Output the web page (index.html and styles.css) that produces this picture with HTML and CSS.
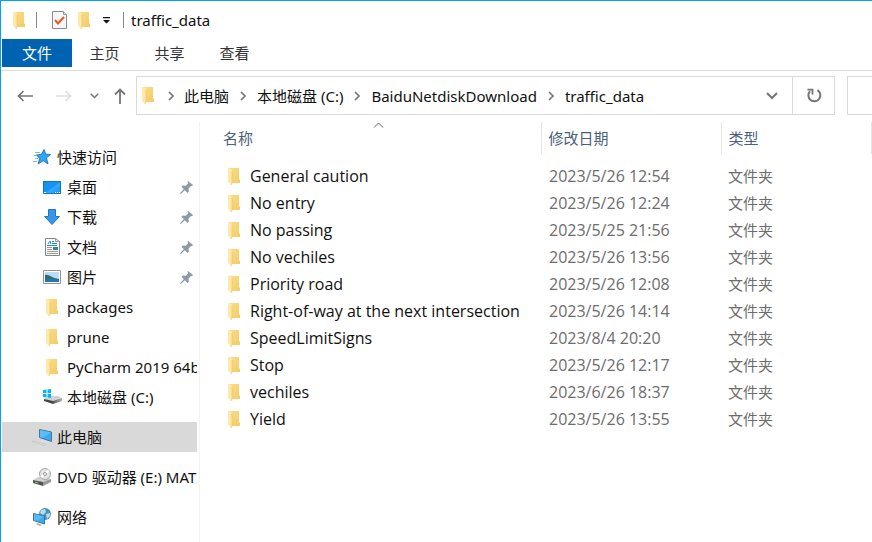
FILE: index.html
```html
<!DOCTYPE html>
<html lang="zh-CN">
<head>
<meta charset="utf-8">
<title>traffic_data</title>
<link rel="stylesheet" href="styles.css">
</head>
<body>
<svg class="defs" aria-hidden="true">
  <defs>
    <linearGradient id="gold" x1="0" y1="0" x2="1" y2="1"><stop offset="0" stop-color="#fbdc85"/><stop offset="1" stop-color="#f3cc68"/></linearGradient>
    <linearGradient id="sky" x1="0" y1="0" x2="1" y2="1"><stop offset="0" stop-color="#168ff0"/><stop offset=".5" stop-color="#1694f5"/><stop offset=".55" stop-color="#35a9fb"/><stop offset="1" stop-color="#1593f3"/></linearGradient>
    <linearGradient id="steel" x1="0" y1="0" x2="1" y2="0"><stop offset="0" stop-color="#555"/><stop offset="1" stop-color="#b5b5b5"/></linearGradient>
  </defs>
  <symbol id="folder" viewBox="0 0 12 17">
    <path d="M2 0h9v11l1 1v3H2z" fill="url(#gold)"/>
    <path d="M0 0h2l2 2v13l-1 2-3-3z" fill="#ffe9a8"/>
    <path d="M4 3v12l-1 2" fill="none" stroke="#eac36a" stroke-width=".7"/>
  </symbol>
  <symbol id="sep" viewBox="0 0 6 10"><path d="M1 1l4 4-4 4" fill="none" stroke="#777" stroke-width="1.7"/></symbol>
  <symbol id="down" viewBox="0 0 12 8"><path d="M1 1l5 5 5-5" fill="none" stroke="#757575" stroke-width="2"/></symbol>
  <symbol id="pin" viewBox="0 0 13 13"><path d="M8 0l5 4-1 1.300-1-.3-2.500 2.500.3 3L7.500 12 4.800 9.300.8 13 0 12.200 3.800 8.300 1.500 5.800l1.300-1.200 3 .1L8.300 2 7.300.8z" fill="#8c9aa5"/></symbol>
</svg>

<div class="window">
  <header class="titlebar">
    <svg class="folder" aria-hidden="true"><use href="#folder"/></svg>
    <span class="rule rule-first"></span>
    <button class="plain" aria-label="属性">
      <svg width="15" height="18" viewBox="0 0 15 18"><path d="M.5.5h11l3 3v14H.500z" fill="#f5f7f9" stroke="#8b8b8b"/><path d="M11.500.5v3h3" fill="#ddd" stroke="#999"/><path d="M3 9l3 3.500L12 6" fill="none" stroke="#ee5519" stroke-width="2"/></svg>
    </button>
    <button class="plain quick-folder" aria-label="新建文件夹"><svg class="folder"><use href="#folder"/></svg></button>
    <button class="plain" aria-label="自定义快速访问工具栏"><svg width="7" height="7" viewBox="0 0 7 7"><path d="M0 0h7v1.300H0zM0 3h7L3.500 6.500z" fill="#111"/></svg></button>
    <span class="rule rule-last"></span>
    <h1>traffic_data</h1>
  </header>

  <nav class="tabs" aria-label="功能区">
    <button class="tab active">文件</button>
    <button class="tab">主页</button>
    <button class="tab">共享</button>
    <button class="tab">查看</button>
  </nav>

  <div class="toolbar">
    <div class="history">
      <button class="plain" aria-label="后退"><svg width="16" height="12" viewBox="0 0 16 12"><path d="M16 6H1.500M6.500 1l-5 5 5 5" fill="none" stroke="#757575" stroke-width="1.700"/></svg></button>
      <button class="plain forward" aria-label="前进"><svg width="16" height="12" viewBox="0 0 16 12"><path d="M0 6h14.500M9.500 1l5 5-5 5" fill="none" stroke="#dedede" stroke-width="1.700"/></svg></button>
      <button class="plain recent" aria-label="最近位置"><svg width="9" height="6"><use href="#down"/></svg></button>
      <button class="plain" aria-label="上移"><svg width="12" height="16" viewBox="0 0 12 16"><path d="M6 16V1.500M1 6.500l5-5 5 5" fill="none" stroke="#757575" stroke-width="1.800"/></svg></button>
    </div>
    <div class="address">
      <svg class="folder" aria-hidden="true"><use href="#folder"/></svg>
      <svg class="sep" aria-hidden="true"><use href="#sep"/></svg>
      <a href="#pc">此电脑</a>
      <svg class="sep" aria-hidden="true"><use href="#sep"/></svg>
      <a href="#c">本地磁盘 (C:)</a>
      <svg class="sep" aria-hidden="true"><use href="#sep"/></svg>
      <a href="#download">BaiduNetdiskDownload</a>
      <svg class="sep" aria-hidden="true"><use href="#sep"/></svg>
      <a href="#data">traffic_data</a>
      <button class="plain expand" aria-label="以前的位置"><svg width="12" height="8"><use href="#down"/></svg></button>
      <button class="refresh" aria-label="刷新"><svg width="16" height="16" viewBox="0 0 16 16"><path d="M11.500 2.200A6 6 0 1 1 4 3.200" fill="none" stroke="#757575" stroke-width="2"/><path d="M1.500 1.600h5v5" fill="none" stroke="#757575" stroke-width="1.800"/></svg></button>
    </div>
    <input class="search" type="search" aria-label="搜索">
  </div>

  <div class="content">
    <nav class="sidebar" aria-label="导航窗格">
      <a class="item root" href="#quick"><span class="icon"><svg width="18" height="16" viewBox="0 0 18 16"><path d="M11 .5l1.700 4.600 4.800.5-4 3.200 1.500 6.200-4.800-3.200L5 15l1.700-5.500L3.500 5.900l5-.6z" fill="#2da6f3" stroke="#1469aa" stroke-width=".8"/><path d="M2 3.500h5M1 6.500h3M2 9.500h3M0 12.500h4" stroke="#78b9e8"/></svg></span><span class="label">快速访问</span></a>
      <a class="item" href="#desktop"><span class="icon"><svg width="18" height="13" viewBox="0 0 18 13"><path d="M0 0h18v13H0z" fill="url(#sky)"/><path d="M.5.5h17v12H.500z" fill="none" stroke="#1476bd"/><path d="M1 11.500h2M12 11.500h1M14 11.500h1M16 11.500h1" stroke="#fff"/></svg></span><span class="label">桌面</span><svg class="pin"><use href="#pin"/></svg></a>
      <a class="item" href="#downloads"><span class="icon"><svg width="16" height="16" viewBox="0 0 16 16"><path d="M4.500.5h7v7h4L8 15.500.5 7.500h4z" fill="#3795ea" stroke="#2475bd"/></svg></span><span class="label">下载</span><svg class="pin"><use href="#pin"/></svg></a>
      <a class="item" href="#documents"><span class="icon"><svg width="15" height="18" viewBox="0 0 15 18"><path d="M.5.5h10l4 3v14H.500z" fill="#fbfbfb" stroke="#858585"/><path d="M10.500.5v3h4" fill="none" stroke="#999"/><path d="M3 6l2-3 1 3M7 3.500h2M7 5.500h5M2 7.500h10" fill="none" stroke="#268dd0"/><path d="M2 9.500h5M2 11.500h5M2 13.500h11M2 15.500h11" stroke="#9a9a9a"/><path d="M8 9h5v3H8z" fill="#397eaa"/></svg></span><span class="label">文档</span><svg class="pin"><use href="#pin"/></svg></a>
      <a class="item" href="#pictures"><span class="icon"><svg width="18" height="14" viewBox="0 0 18 14"><path d="M.5.5h17v13H.500z" fill="#fff" stroke="#929292"/><path d="M2 2h14v10H2z" fill="#b9ddfb"/><path d="M2 5c4-1 6 3 14 4v3H2z" fill="#326d68"/><path d="M2 10c5-2 8-1 14 0v2H2z" fill="#2475b4"/></svg></span><span class="label">图片</span><svg class="pin"><use href="#pin"/></svg></a>
      <a class="item" href="#packages"><span class="icon"><svg class="folder"><use href="#folder"/></svg></span><span class="label">packages</span></a>
      <a class="item" href="#prune"><span class="icon"><svg class="folder"><use href="#folder"/></svg></span><span class="label">prune</span></a>
      <a class="item" href="#pycharm"><span class="icon"><svg class="folder"><use href="#folder"/></svg></span><span class="label">PyCharm 2019 64b</span></a>
      <a class="item" href="#disk"><span class="icon"><svg width="19" height="16" viewBox="0 0 19 16"><path d="M1 10l6-3h8l4 2-9 4z" fill="#d2d2d2"/><path d="M1 10l9 2v3l-9-3z" fill="#444"/><path d="M10 12l9-3v3l-9 3z" fill="url(#steel)"/><path d="M0 1l3.500-.5V4H0zM4.500.400L8 0v4H4.500zM0 5h3.500v3.500L0 8zM4.500 5H8v4l-3.500-.4z" fill="#00b7f1"/></svg></span><span class="label">本地磁盘 (C:)</span></a>
      <a class="item root selected" href="#computer"><span class="icon"><svg width="20" height="17" viewBox="0 0 20 17"><path d="M7.500.5l12 2.500v9.500L7.500 8.500z" fill="#39aaf7" stroke="#487797"/><path d="M8 1l11 2.500L10 9 8 8z" fill="#78c7ff" opacity=".6"/><path d="M11 11l5 2-3 1-4-2z" fill="#ddd"/><path d="M0 12.500l2-.5 12 3.500-2 .8z" fill="#eee" stroke="#b4b8bb" stroke-width=".6"/></svg></span><span class="label">此电脑</span></a>
      <a class="item root" href="#dvd"><span class="icon"><svg width="18" height="18" viewBox="0 0 18 18"><path d="M0 12l5-3h8l5 2-8 4z" fill="#d1d1d1"/><path d="M0 12l10 2v4L0 15z" fill="#555"/><path d="M10 14l8-3v3l-8 4z" fill="#999"/><path d="M2 14l3 1" stroke="#6ee35b"/><circle cx="12" cy="6" r="5.500" fill="#e4e4e4" stroke="#a5a5a5"/><path d="M12 6l4-3.500M12 6L8 9" stroke="#fff" stroke-width="2"/><circle cx="12" cy="6" r="1.500" fill="#fff" stroke="#999"/></svg></span><span class="label">DVD 驱动器 (E:) MAT</span></a>
      <a class="item root" href="#network"><span class="icon"><svg width="18" height="18" viewBox="0 0 18 18"><circle cx="12" cy="6" r="6" fill="#4591bf"/><path d="M8 2l4-1 1 3-3 3-3-2zM13 6l4-1v3l-3 3z" fill="#b7dced"/><path d="M.5 5.500l11 2.500v8L.5 12.500z" fill="#36aaf7" stroke="#417499"/><path d="M1 6l10 2.500L4 13l-3-1z" fill="#7bcaff" opacity=".5"/><path d="M4 15l5 2-2 1-4-2z" fill="#aaa"/></svg></span><span class="label">网络</span></a>
    </nav>

    <main class="files">
      <table>
        <colgroup><col class="col-name"><col class="col-date"><col class="col-type"></colgroup>
        <thead><tr>
          <th scope="col">名称<svg class="sort" viewBox="0 0 11 6" aria-hidden="true"><path d="M1 5.500l4.500-4.500L10 5.500" fill="none" stroke="#666"/></svg></th>
          <th scope="col">修改日期</th>
          <th scope="col">类型</th>
        </tr></thead>
        <tbody>
          <tr><td><svg class="folder"><use href="#folder"/></svg>General caution</td><td>2023/5/26 12:54</td><td>文件夹</td></tr>
          <tr><td><svg class="folder"><use href="#folder"/></svg>No entry</td><td>2023/5/26 12:24</td><td>文件夹</td></tr>
          <tr><td><svg class="folder"><use href="#folder"/></svg>No passing</td><td>2023/5/25 21:56</td><td>文件夹</td></tr>
          <tr><td><svg class="folder"><use href="#folder"/></svg>No vechiles</td><td>2023/5/26 13:56</td><td>文件夹</td></tr>
          <tr><td><svg class="folder"><use href="#folder"/></svg>Priority road</td><td>2023/5/26 12:08</td><td>文件夹</td></tr>
          <tr><td><svg class="folder"><use href="#folder"/></svg>Right-of-way at the next intersection</td><td>2023/5/26 14:14</td><td>文件夹</td></tr>
          <tr><td><svg class="folder"><use href="#folder"/></svg>SpeedLimitSigns</td><td>2023/8/4 20:20</td><td>文件夹</td></tr>
          <tr><td><svg class="folder"><use href="#folder"/></svg>Stop</td><td>2023/5/26 12:17</td><td>文件夹</td></tr>
          <tr><td><svg class="folder"><use href="#folder"/></svg>vechiles</td><td>2023/6/26 18:37</td><td>文件夹</td></tr>
          <tr><td><svg class="folder"><use href="#folder"/></svg>Yield</td><td>2023/5/26 13:55</td><td>文件夹</td></tr>
        </tbody>
      </table>
    </main>
  </div>
</div>
</body>
</html>
```
FILE: styles.css
```css
* { box-sizing: border-box; }

body {
  margin: 0;
  background: #fff;
  color: #111;
  font: 15px/20px "Noto Sans", "Noto Sans CJK SC", sans-serif;
  overflow: hidden;
}

button, input { font: inherit; color: inherit; }
a { color: inherit; text-decoration: none; }
svg { display: block; flex: none; }

.defs { position: absolute; width: 0; height: 0; }
.folder { width: 12px; height: 17px; }
.plain { display: flex; padding: 0; border: 0; background: none; }

.window {
  display: flex;
  flex-direction: column;
  min-height: 100vh;
  border-top: 1px solid #00a2ff;
  border-left: 1px solid #00a2ff;
}

.titlebar {
  display: flex;
  align-items: center;
  height: 38px;
  padding-left: 12px;
}
.titlebar h1 { margin: 0; font-size: 15px; font-weight: 400; }
.quick-folder { margin: 0 13px 0 11px; }
.rule { width: 1px; height: 16px; background: #888; }
.rule-first { margin: 0 15px 0 11px; }
.rule-last { margin: 0 7px 0 13px; }

.tabs {
  display: flex;
  height: 32px;
  padding-left: 1px;
  border-bottom: 1px solid #dadbdc;
}
.tab {
  width: 65px;
  height: 28px;
  padding: 0;
  border: 0;
  background: none;
  color: #333;
}
.tab.active { width: 70px; background: #0063b1; color: #fff; }

.toolbar {
  display: flex;
  align-items: center;
  padding: 5px 0 7px;
}
.history {
  display: flex;
  align-items: center;
  width: 135px;
  padding-left: 16px;
}
.forward { margin: 0 18px 0 23px; }
.recent { margin-right: 15px; }

.address {
  display: flex;
  flex: 1;
  align-items: center;
  height: 39px;
  padding-left: 5px;
  border: 1px solid #d9d9d9;
  white-space: nowrap;
}
.sep { width: 6px; height: 10px; margin: 0 11px; }
.address .folder + .sep { margin: 0 10px 0 14px; }
.expand { margin-left: auto; }
.refresh {
  display: flex;
  align-items: center;
  justify-content: center;
  align-self: stretch;
  width: 42px;
  margin-left: 14px;
  padding: 0;
  border: 0;
  border-left: 1px solid #d9d9d9;
  background: none;
}
.search {
  width: 25px;
  height: 39px;
  margin-left: 12px;
  padding: 0;
  border: 1px solid #d9d9d9;
  border-right: 0;
  border-radius: 0;
  background: none;
  appearance: none;
}

.content { display: flex; flex: 1; }

.sidebar {
  width: 199px;
  flex: none;
  padding: 20px 2px 10px 1px;
  border-right: 1px solid #f2f2f2;
}
.item {
  display: flex;
  align-items: center;
  height: 30px;
  padding-left: 39px;
}
.item.root { padding-left: 29px; }
.item.root ~ .root { margin-top: 10px; }
.icon {
  display: flex;
  flex: none;
  justify-content: center;
  width: 22px;
  margin-right: 4px;
}
.label { flex: 1; overflow: hidden; white-space: nowrap; }
.pin { width: 13px; height: 13px; margin-right: 4px; }
.selected { background: #d9d9d9; }

.files { flex: 1; min-width: 0; }
table { table-layout: fixed; width: 671px; border-collapse: collapse; }
.col-name { width: 341px; }
.col-date { width: 180px; }
.col-type { width: 150px; }
th, td { padding: 0 0 0 7px; text-align: left; white-space: nowrap; }
th {
  position: relative;
  height: 32px;
  border-right: 1px solid #e5e5e5;
  color: #4c607a;
  font-weight: 400;
}
th:first-child { padding-left: 23px; }
.sort { position: absolute; top: 0; left: 173px; width: 11px; height: 6px; }
tbody::before { content: ""; display: block; height: 8px; }
td { height: 27px; color: #6d6d6d; }
td:nth-child(-n+2) { font-family: "Open Sans", sans-serif; font-size: 16px; }
td:nth-child(2) { padding-left: 8px; }
td:first-child { padding-left: 28px; color: #111; }
td .folder { display: inline-block; margin-right: 10px; vertical-align: -3px; }
```
